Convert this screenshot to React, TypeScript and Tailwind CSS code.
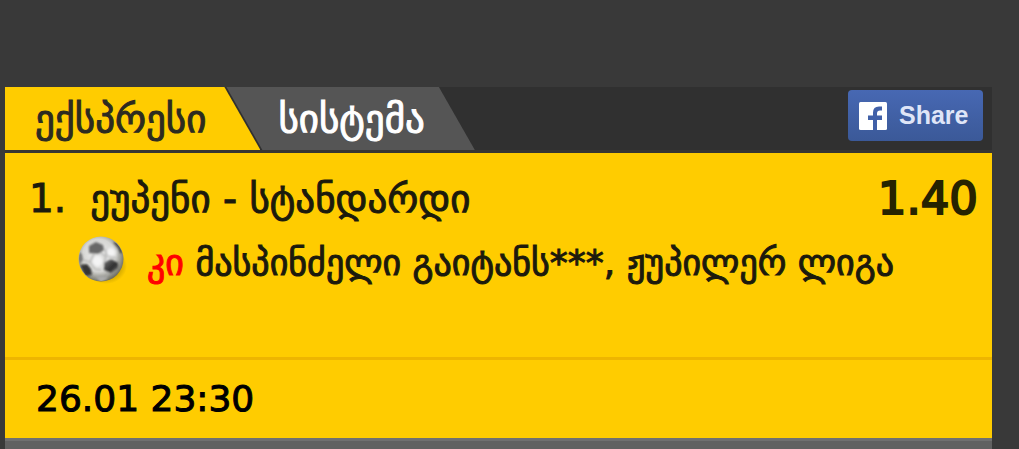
import { clsx } from "clsx"
import { useState } from "react"

const tabs = [
  {
    id: "express",
    label: "ექსპრესი",
    shape: "pl-[30px] pr-[54px] [clip-path:polygon(0_0,calc(100%-36px)_0,100%_100%,0_100%)]",
  },
  {
    id: "system",
    label: "სისტემა",
    shape: "-ml-[34px] pl-[52px] pr-[50px] [clip-path:polygon(0_0,calc(100%-36px)_0,100%_100%,36px_100%)]",
  },
]

function FootballIcon() {
  return (
    <svg viewBox="0 0 50 50" className="mt-1.5 size-[50px] shrink-0" aria-hidden="true">
      <defs>
        <radialGradient id="ball" cx="45%" cy="42%" r="60%">
          <stop offset="0" stopColor="#f2f2f2" />
          <stop offset="0.6" stopColor="#d6d6d3" />
          <stop offset="1" stopColor="#66665a" />
        </radialGradient>
        <radialGradient id="shadow">
          <stop offset="0.6" stopColor="#8f7200" stopOpacity="0.5" />
          <stop offset="1" stopColor="#8f7200" stopOpacity="0" />
        </radialGradient>
        <radialGradient id="panel">
          <stop offset="0.5" stopColor="#f4f4f4" />
          <stop offset="1" stopColor="#d2d2d0" />
        </radialGradient>
        <linearGradient id="patch" x1="0" y1="0" x2="1" y2="1">
          <stop offset="0" stopColor="#777" />
          <stop offset="0.6" stopColor="#2e2e2e" />
          <stop offset="1" stopColor="#777" />
        </linearGradient>
        <filter id="soft" x="-5%" y="-5%" width="110%" height="110%">
          <feGaussianBlur stdDeviation="0.8" />
        </filter>
        <clipPath id="edge">
          <circle cx="24" cy="24" r="22" />
        </clipPath>
      </defs>
      <ellipse cx="29" cy="31" rx="21" ry="18" fill="url(#shadow)" />
      <circle cx="24" cy="24" r="22.5" fill="url(#ball)" />
      <g clipPath="url(#edge)">
        <g filter="url(#soft)">
          <path d="M15 20l7-2 6 5-1 8-8 3-6-6z" fill="url(#panel)" />
          <path d="M28 14l6-3 6 5-1 6-6 2-5-4z" fill="url(#panel)" />
          <path d="M17 19l-4 8 5 7M23 17l6 5-2 7M13 27l-7-2M30 21l-2-7M18 34l6 1M31 21l8 2M31 37l-2 6" fill="none" stroke="#aaa" strokeWidth="1.2" />
          <path d="M12 11l7-4 7 3 1 5-6 4-9-1z" fill="#686868" />
          <path d="M36 7l5 6 2 5 3 0-2-11z" fill="#484848" />
          <path d="M1 17l4 2 1 6-5 5z" fill="#777" />
          <path d="M3 30l7-1 4 5 1 6-7 1z" fill="#343434" />
          <path d="M27 28l7-4 7 4 0 5-7 5-7-3z" fill="url(#patch)" />
          <path d="M19 42l7-1 5 2-7 5z" fill="#aaa" />
        </g>
      </g>
    </svg>
  )
}

function ShareButton() {
  return (
    <button
      type="button"
      className="mt-[3px] mr-[9px] flex h-[51px] w-[135px] items-center gap-3 rounded-sm bg-linear-to-b from-[#4768b3] to-[#3b5998] pl-[11px] font-['Liberation_Sans',sans-serif] text-[25px] font-bold text-[#dfe5f7]"
    >
      <svg viewBox="0 0 28 28" className="size-7 shrink-0" aria-hidden="true">
        <rect width="28" height="28" rx="1.5" fill="#fff" />
        <path d="M14 28V18h-5v-4.5h5v-3q0-6 6-6h3v4h-2q-3 0-3 3v2h5V18h-5v10z" fill="#4160a8" />
      </svg>
      Share
    </button>
  )
}

export default function App() {
  const [active, setActive] = useState("express")

  return (
    <div className="flex min-h-screen flex-col bg-[#393939] pt-[87px] pr-[27px] pl-[5px] font-['DejaVu_Sans',sans-serif]">
      <header className="flex items-start justify-between border-b-3 border-[#383733] bg-[#303030]">
        <nav className="flex">
          {tabs.map((tab) => (
            <button
              key={tab.id}
              type="button"
              onClick={() => setActive(tab.id)}
              className={clsx(
                "h-[63px] text-[39px] leading-[62px] whitespace-nowrap [-webkit-text-stroke:1px]",
                tab.shape,
                active === tab.id ? "bg-[#ffcc00] text-[#2d2b20]" : "bg-[#555] text-white"
              )}
            >
              {tab.label}
            </button>
          ))}
        </nav>
        <ShareButton />
      </header>

      <main className="bg-[#ffcc00] text-[36px] text-[#1c1a0c] [-webkit-text-stroke:1px]">
        <section className="h-[207px] border-b-3 border-[#eeb500] pt-4 pr-[14px] pl-6">
          <div className="flex items-center justify-between leading-[60px]">
            <h2 className="flex gap-6 text-[39px]">
              <span>1.</span>
              <span>ეუპენი - სტანდარდი</span>
            </h2>
            <span className="text-[45px] text-[#262300] [-webkit-text-stroke:2px]">1.40</span>
          </div>
          <div className="flex items-start gap-5 pl-12 leading-[68px] whitespace-nowrap">
            <FootballIcon />
            <p>
              <span className="text-[#ff0000]">კი</span> მასპინძელი გაიტანს***, ჟუპილერ ლიგა
            </p>
          </div>
        </section>
        <time className="block pl-[31px] leading-[78px] text-black">26.01 23:30</time>
      </main>

      <footer className="grow border-t-3 border-[#707070] bg-[#616161]" />
    </div>
  )
}
